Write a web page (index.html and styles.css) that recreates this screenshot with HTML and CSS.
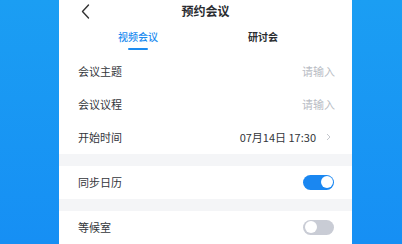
FILE: index.html
```html
<!DOCTYPE html>
<html lang="zh-CN">
<head>
<meta charset="utf-8">
<title>预约会议</title>
<link rel="stylesheet" href="styles.css">
</head>
<body>
<div class="stage">
  <div class="side side-left"></div>
  <div class="phone">
    <div class="header">
      <svg class="back" width="9" height="15" viewBox="0 0 9 15"><path d="M7.5 1 L1.5 7.5 L7.5 14" fill="none" stroke="#333" stroke-width="1.4" stroke-linecap="round" stroke-linejoin="round"/></svg>
      <div class="title">预约会议</div>
    </div>
    <div class="tabs">
      <div class="tab active">视频会议</div>
      <div class="tab">研讨会</div>
    </div>
    <div class="row"><span class="label">会议主题</span><span class="placeholder">请输入</span></div>
    <div class="row"><span class="label">会议议程</span><span class="placeholder">请输入</span></div>
    <div class="row"><span class="label">开始时间</span><span class="value">07月14日 17:30<svg class="chev" width="5" height="8" viewBox="0 0 5 8"><path d="M1 1 L4 4 L1 7" fill="none" stroke="#c4c7cd" stroke-width="1"/></svg></span></div>
    <div class="sep"></div>
    <div class="row"><span class="label">同步日历</span><span class="toggle on"><span class="knob"></span></span></div>
    <div class="sep"></div>
    <div class="row"><span class="label">等候室</span><span class="toggle"><span class="knob"></span></span></div>
  </div>
  <div class="side side-right"></div>
</div>
</body>
</html>
```
FILE: styles.css
```css
html, body { margin: 0; padding: 0; }
body {
  font-family: "Noto Sans CJK SC", "Noto Sans", sans-serif;
  color: #2f3237;
  background: #1a96f2;
  overflow: hidden;
}
.stage { display: flex; width: 402px; height: 244px; }
.side { background: linear-gradient(#1b9ef3, #168ff4); }
.side-left { width: 59px; }
.side-right { flex: 1; }
.phone { width: 293px; background: #fff; display: flex; flex-direction: column; }
.header { height: 22px; display: flex; align-items: center; justify-content: center; position: relative; }
.back { position: absolute; left: 22px; top: 4px; }
.title { font-size: 12px; font-weight: 700; color: #2a2d31; line-height: 22px; }
.tabs { height: 33px; display: flex; gap: 90px; padding-left: 59px; }
.tab { font-size: 10px; font-weight: 700; color: #2a2d31; line-height: 12px; padding-top: 9px; position: relative; }
.tab.active { color: #1d8cf0; font-weight: 500; }
.tab.active::after {
  content: ""; position: absolute; left: 10px; right: 10px; top: 26px; height: 2px;
  background: #1d8cf0; border-radius: 1px;
}
.row { height: 34px; display: flex; align-items: center; justify-content: space-between; padding: 0 17px 0 19px; }
.label { font-size: 11px; color: #33363b; }
.placeholder { font-size: 11px; color: #b8bcc4; }
.value { font-size: 11px; color: #33363b; display: flex; align-items: center; gap: 10px; padding-right: 4px; }
.chev { display: block; }
.sep { height: 12px; background: #f4f5f7; }
.toggle { width: 31px; height: 15px; border-radius: 8px; background: #c9ccd5; position: relative; margin-right: 1px; }
.toggle.on { background: #1a87f1; }
.knob { position: absolute; top: 1.5px; left: 1.5px; width: 12px; height: 12px; border-radius: 50%; background: #fff; }
.toggle.on .knob { left: auto; right: 1.5px; }
```
